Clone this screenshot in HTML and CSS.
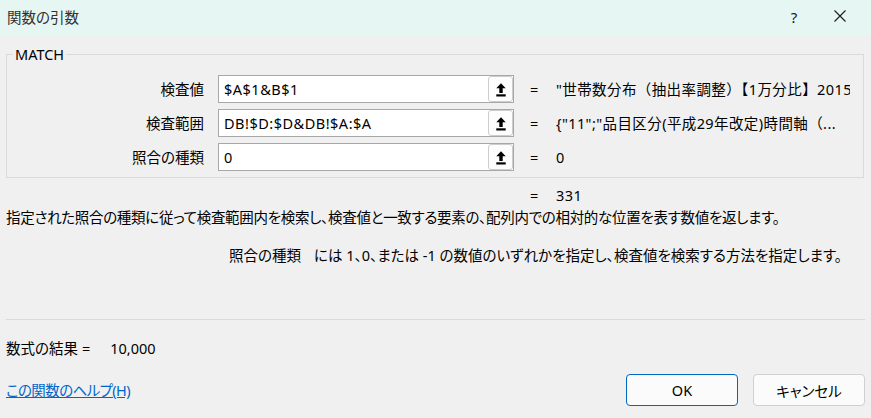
FILE: index.html
```html
<!DOCTYPE html>
<html lang="ja">
<head>
<meta charset="utf-8">
<title>関数の引数</title>
<link rel="stylesheet" href="styles.css">
</head>
<body>
<div class="dialog">
  <div class="titlebar">
    <span class="title">関数の引数</span>
    <div class="tb-btns">
      <span class="help">?</span>
      <span class="close">
        <svg width="12" height="12" viewBox="0 0 12 12"><path d="M0.5 0.5 L11.5 11.5 M11.5 0.5 L0.5 11.5" stroke="#1a1a1a" stroke-width="1.1" fill="none"/></svg>
      </span>
    </div>
  </div>
  <div class="content">
    <div class="group">
      <span class="legend">MATCH</span>
      <div class="args">
        <label class="arg-label">検査値</label>
        <div class="arg-input"><span class="arg-text">$A$1&amp;B$1</span><span class="ref-btn"><svg width="10" height="14" viewBox="0 0 10 14"><polygon points="5,0.3 9.7,5.3 6.7,5.3 6.7,10 3.3,10 3.3,5.3 0.3,5.3" fill="#000"/><rect x="0.3" y="11.3" width="9.4" height="2.2" fill="#000"/></svg></span></div>
        <span class="eq">=</span>
        <span class="val">"世帯数分布（抽出率調整）【1万分比】2015年</span>

        <label class="arg-label">検査範囲</label>
        <div class="arg-input"><span class="arg-text">DB!$D:$D&amp;DB!$A:$A</span><span class="ref-btn"><svg width="10" height="14" viewBox="0 0 10 14"><polygon points="5,0.3 9.7,5.3 6.7,5.3 6.7,10 3.3,10 3.3,5.3 0.3,5.3" fill="#000"/><rect x="0.3" y="11.3" width="9.4" height="2.2" fill="#000"/></svg></span></div>
        <span class="eq">=</span>
        <span class="val">{"11";"品目区分(平成29年改定)時間軸（...</span>

        <label class="arg-label">照合の種類</label>
        <div class="arg-input"><span class="arg-text">0</span><span class="ref-btn"><svg width="10" height="14" viewBox="0 0 10 14"><polygon points="5,0.3 9.7,5.3 6.7,5.3 6.7,10 3.3,10 3.3,5.3 0.3,5.3" fill="#000"/><rect x="0.3" y="11.3" width="9.4" height="2.2" fill="#000"/></svg></span></div>
        <span class="eq">=</span>
        <span class="val">0</span>
      </div>
    </div>

    <div class="result-row"><span class="eq">=</span><span class="val">331</span></div>

    <p class="desc">指定された照合の種類に従って検査範囲内を検索し、検査値と一致する要素の、配列内での相対的な位置を表す数値を返します。</p>
    <p class="desc2"><span class="desc2-label">照合の種類</span><span>には 1、0、または -1 の数値のいずれかを指定し、検査値を検索する方法を指定します。</span></p>

    <div class="sep"></div>

    <div class="formula"><span>数式の結果</span><span class="f-eq">=</span><span class="f-val">10,000</span></div>

    <div class="footer">
      <a class="help-link" href="#">この関数のヘルプ(H)</a>
      <div class="buttons">
        <button class="btn btn-ok" type="button">OK</button>
        <button class="btn" type="button">キャンセル</button>
      </div>
    </div>
  </div>
</div>
</body>
</html>
```
FILE: styles.css
```css
html, body {
  margin: 0;
  padding: 0;
}
body {
  width: 871px;
  height: 418px;
  overflow: hidden;
  background: #f0f0f0;
  font-family: "Noto Sans", "Noto Sans CJK JP", sans-serif;
  font-size: 14.5px;
  color: #000;
  font-feature-settings: "palt";
}
.dialog {
  display: flex;
  flex-direction: column;
  height: 418px;
}
.titlebar {
  height: 35px;
  background: #e6f6f3;
  display: flex;
  align-items: center;
  justify-content: space-between;
  padding-left: 7px;
  flex-shrink: 0;
}
.title {
  color: #303030;
  font-size: 14.5px;
  line-height: 18px;
  margin-top: -2px;
}
.tb-btns {
  display: flex;
  align-items: center;
  height: 100%;
}
.help {
  width: 46px;
  text-align: center;
  font-family: "Noto Sans", sans-serif;
  font-size: 15px;
  color: #1a1a1a;
  margin-top: -2px;
}
.close {
  width: 46px;
  margin-right: 8px;
  display: flex;
  justify-content: center;
  margin-top: -3px;
}
.content {
  padding: 0 6px;
  display: flex;
  flex-direction: column;
}
.group {
  position: relative;
  margin-top: 19px;
  margin-right: 1px;
  border: 1px solid #dadada;
  padding: 20px 0 6px;
}
.legend {
  position: absolute;
  left: 6px;
  top: -10px;
  padding: 0 2px;
  background: #f0f0f0;
  line-height: 18px;
  font-size: 14.5px;
}
.args {
  display: grid;
  grid-template-columns: 211px 296px 42px minmax(0, 1fr);
  grid-auto-rows: 28px;
  row-gap: 6px;
  align-items: center;
}
.arg-label {
  text-align: right;
  padding-right: 14px;
  line-height: 18px;
}
.arg-input {
  height: 28px;
  box-sizing: border-box;
  border: 1px solid #a8a8a8;
  background: #fff;
  display: flex;
  align-items: stretch;
}
.arg-text {
  flex: 1;
  padding-left: 5px;
  display: flex;
  align-items: center;
  white-space: nowrap;
  overflow: hidden;
  letter-spacing: 0.5px;
}
.ref-btn {
  width: 25px;
  box-sizing: border-box;
  border: 1px solid #cdcdcd;
  border-radius: 3px;
  background: #fdfdfd;
  display: flex;
  align-items: center;
  justify-content: center;
}
.ref-btn svg {
  margin-top: 1px;
}
.eq {
  padding-left: 16px;
  line-height: 18px;
}
.val {
  white-space: nowrap;
  overflow: hidden;
  line-height: 18px;
  margin-right: 13px;
  font-feature-settings: normal;
  letter-spacing: 0.4px;
}
.result-row {
  display: grid;
  grid-template-columns: 42px 1fr;
  margin-left: 508px;
  margin-top: 8px;
  line-height: 18px;
}
.desc {
  margin: 4px 0 0;
  line-height: 18px;
  white-space: nowrap;
  letter-spacing: -0.3px;
}
.desc2 {
  margin: 20px 0 0 223px;
  line-height: 18px;
  display: flex;
  white-space: nowrap;
}
.desc2-label {
  margin-right: 13px;
}
.sep {
  margin-top: 55px;
  height: 1px;
  background: #d9d9d9;
}
.formula {
  margin-top: 19px;
  line-height: 18px;
  display: flex;
}
.f-eq {
  margin-left: 4px;
}
.f-val {
  margin-left: 20px;
}
.footer {
  margin-top: 17px;
  height: 32px;
  display: flex;
  align-items: center;
  justify-content: space-between;
}
.help-link {
  color: #0066cc;
  text-decoration: underline;
  line-height: 18px;
  letter-spacing: -0.6px;
}
.buttons {
  display: flex;
  gap: 15px;
}
.btn {
  width: 112px;
  height: 32px;
  box-sizing: border-box;
  border: 1px solid #d0d0d0;
  border-radius: 4px;
  background: #fbfbfb;
  font-family: "Noto Sans", "Noto Sans CJK JP", sans-serif;
  font-size: 14.5px;
  color: #000;
  padding: 0;
  font-feature-settings: "palt";
}
.btn-ok {
  border-color: #0067c0;
}
```
